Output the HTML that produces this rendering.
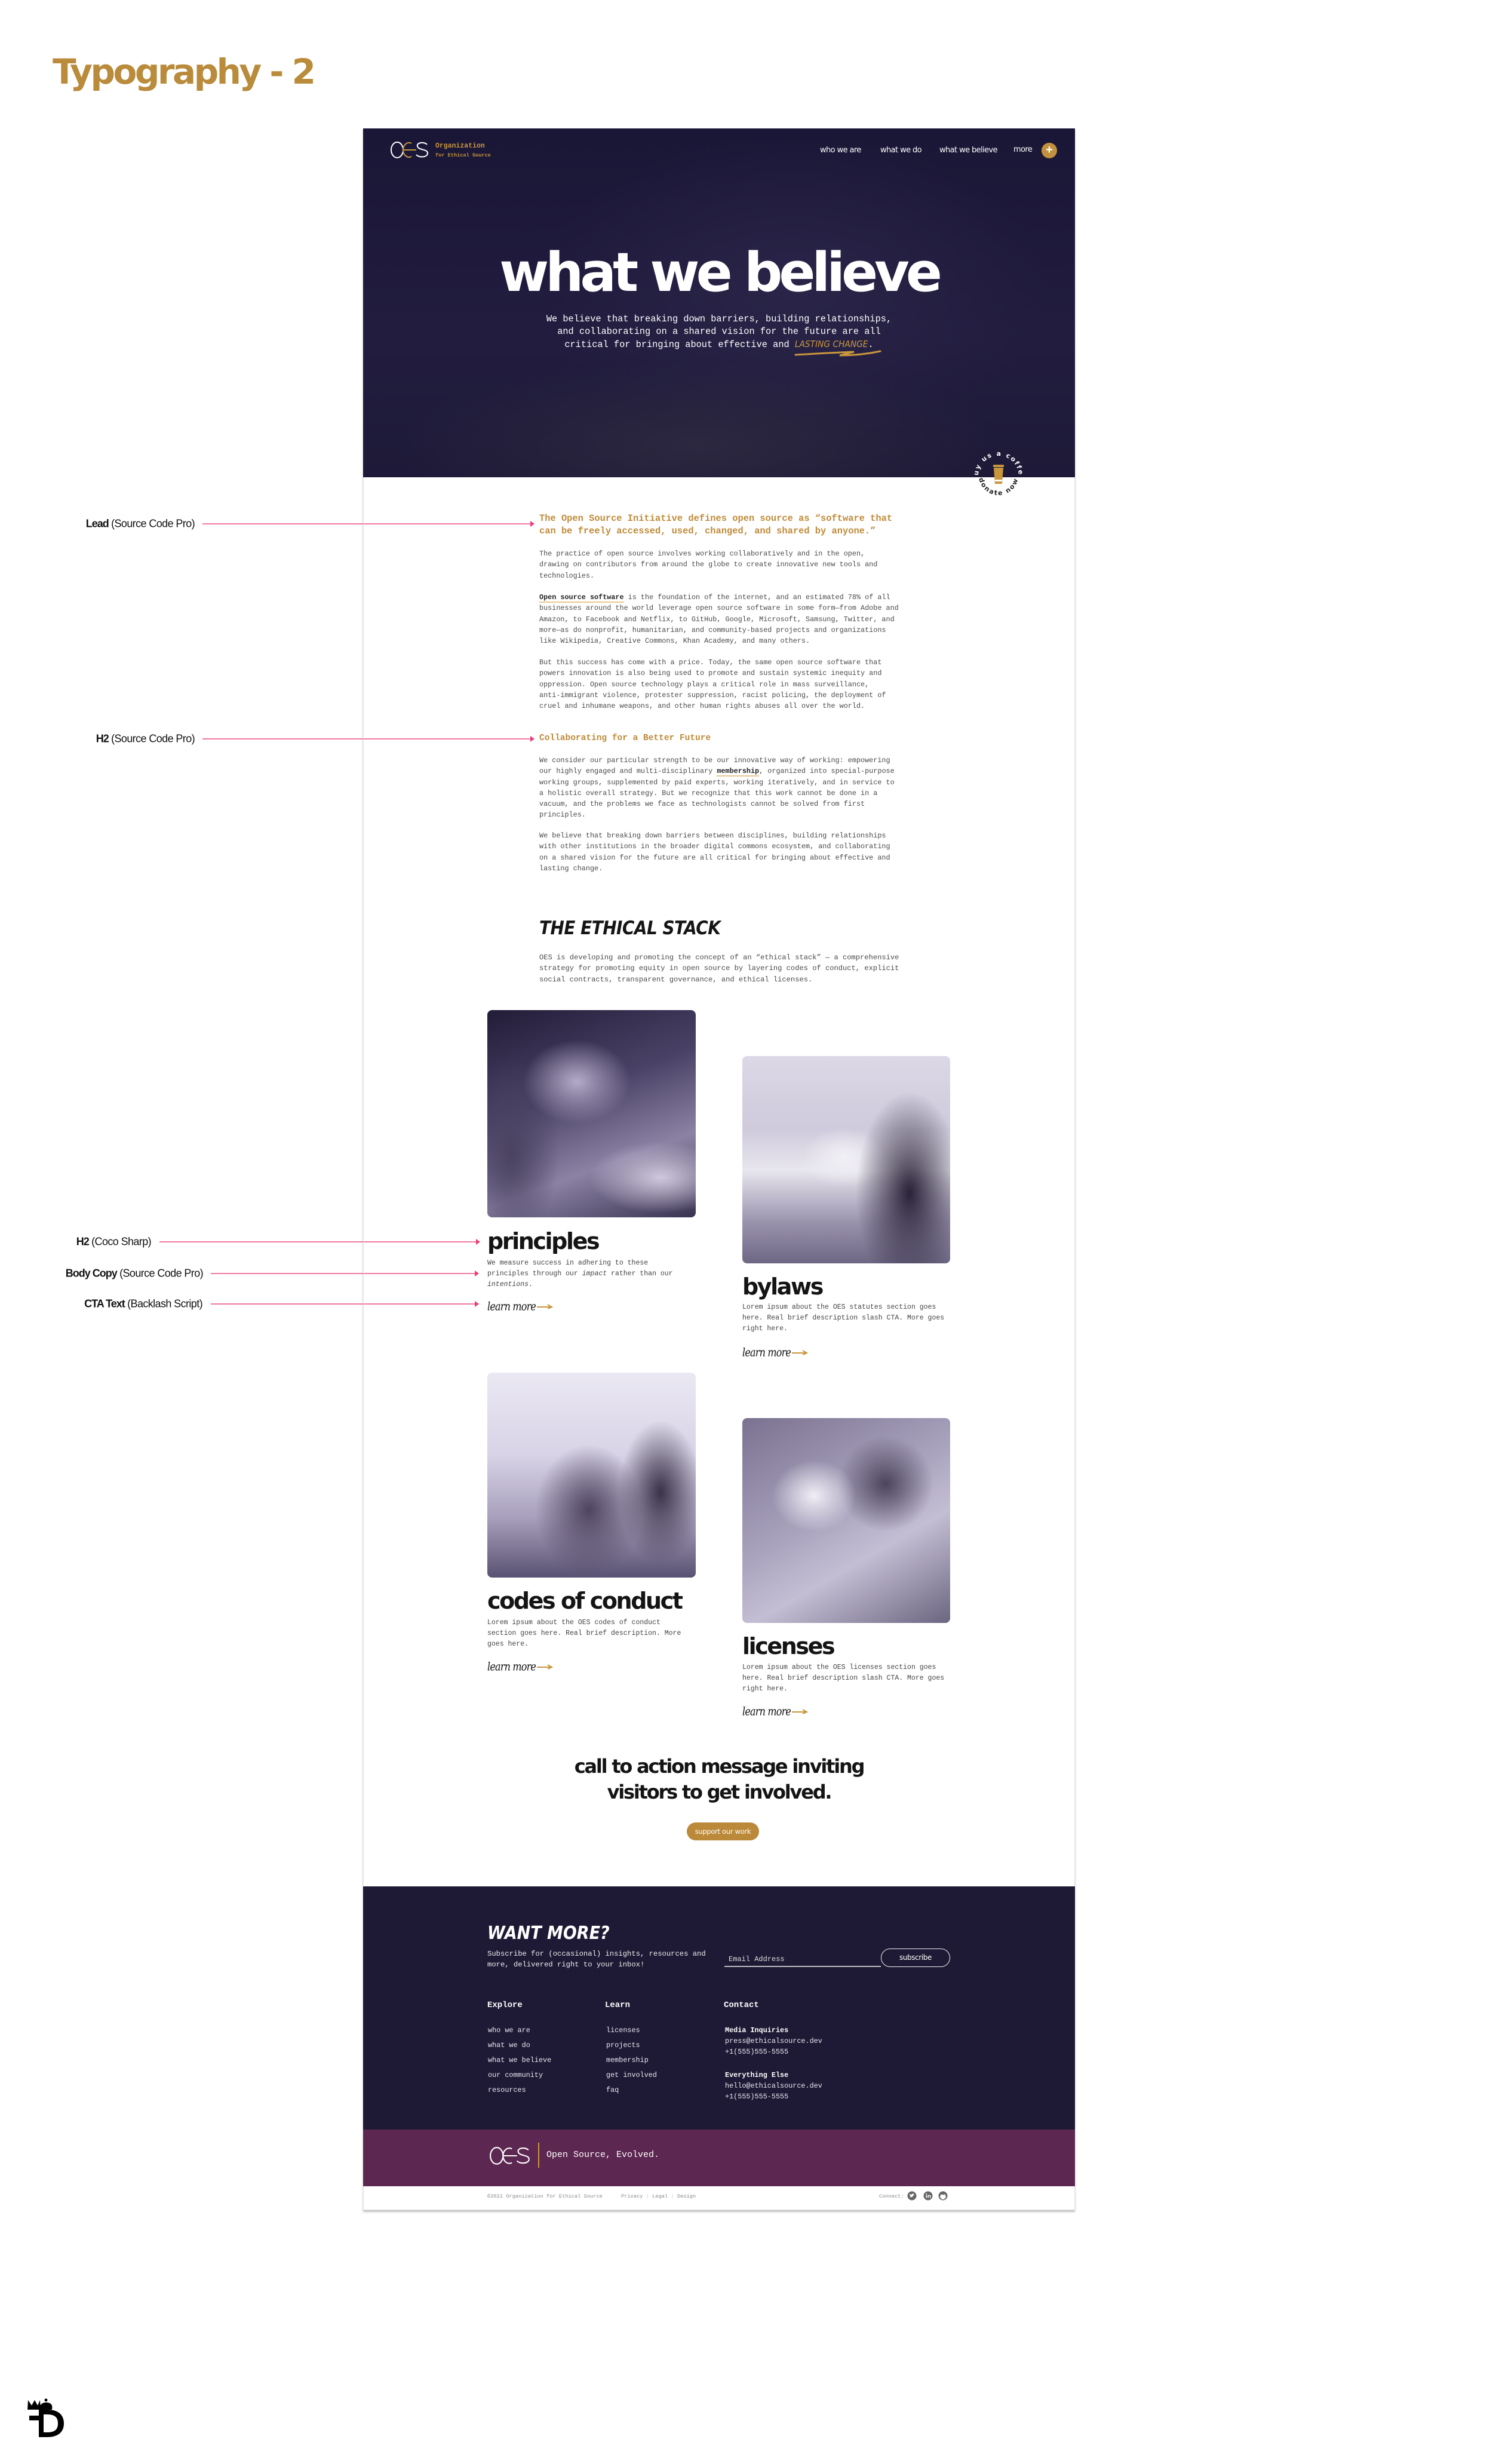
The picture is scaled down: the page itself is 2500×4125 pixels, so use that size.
<!DOCTYPE html>
<html><head><meta charset="utf-8">
<style>
*{margin:0;padding:0;box-sizing:border-box}
html,body{width:2500px;height:4125px;background:#fff;overflow:hidden;position:relative;font-family:"Liberation Sans",sans-serif}
.a{position:absolute;white-space:nowrap}
.mono{font-family:"Liberation Mono","DejaVu Sans Mono",monospace}
.coco{font-family:"DejaVu Sans","Liberation Sans",sans-serif;font-weight:bold}
.p{font-family:"Liberation Mono",monospace;color:#4a4a4a;font-size:11.8px;line-height:18.3px;white-space:nowrap}
.ann{position:absolute;font-size:18px;color:#111;letter-spacing:-0.6px;white-space:nowrap;transform:translateY(-50%)}
.ann b{font-weight:bold;letter-spacing:-1px}
.line{position:absolute;height:2px;background:#f07aa0}
.line:after{content:"";position:absolute;right:-2px;top:-4px;border-left:7px solid #ec3d7a;border-top:5px solid transparent;border-bottom:5px solid transparent}
.img{position:absolute;border-radius:8px;overflow:hidden}
.ct{position:absolute;font-family:"DejaVu Sans",sans-serif;font-weight:bold;font-size:38px;letter-spacing:-2.4px;color:#141414;white-space:nowrap;line-height:1;transform:translateY(-55%)}
.learn{position:absolute;font-family:"DejaVu Serif",serif;font-style:italic;font-size:16px;color:#111;letter-spacing:-0.8px;white-space:nowrap;transform:translateY(-55%) scaleY(1.2)}
.arrow{position:absolute}
.fl{position:absolute;font-family:"Liberation Mono",monospace;font-size:11.8px;color:#e8e6f0;white-space:nowrap;transform:translateY(-50%)}
</style></head><body>

<div class="a coco" style="left:88px;top:82px;font-size:58px;color:#b98b3b;letter-spacing:-3.5px;line-height:76px">Typography - 2</div>

<!-- annotations -->
<div class="ann" style="right:2174px;top:877px"><b>Lead</b> (Source Code Pro)</div>
<div class="line" style="left:339px;width:554px;top:876px"></div>
<div class="ann" style="right:2174px;top:1237px"><b>H2</b> (Source Code Pro)</div>
<div class="line" style="left:339px;width:554px;top:1236px"></div>
<div class="ann" style="right:2247px;top:2079px"><b>H2</b> (Coco Sharp)</div>
<div class="line" style="left:267px;width:535px;top:2078px"></div>
<div class="ann" style="right:2160px;top:2132px"><b>Body Copy</b> (Source Code Pro)</div>
<div class="line" style="left:353px;width:447px;top:2131px"></div>
<div class="ann" style="right:2161px;top:2183px"><b>CTA Text</b> (Backlash Script)</div>
<div class="line" style="left:353px;width:447px;top:2182px"></div>

<!-- frame -->
<div class="a" style="left:608px;top:215px;width:1192px;height:3485px;border:1px solid #e4e4ea;box-shadow:0 3px 3px rgba(0,0,0,.25)"></div>

<!-- hero -->
<div class="a" style="left:608px;top:215px;width:1192px;height:584px;background:radial-gradient(ellipse 500px 140px at 560px 530px,#2c2840 0%,rgba(44,40,64,0) 100%),radial-gradient(ellipse 420px 260px at 720px 270px,#2a2548 0%,rgba(40,36,70,0) 100%),linear-gradient(180deg,#1a1636 0%,#221d3f 60%,#1d1937 100%)"></div>
<svg class="a" style="left:653px;top:236px" width="66" height="30" viewBox="0 0 66 30">
<ellipse cx="12" cy="15" rx="10" ry="13" fill="none" stroke="#fff" stroke-width="2"/>
<path d="M36 4 A10 12 0 1 0 36 26 M22 15 H44" fill="none" stroke="#c9963e" stroke-width="2"/>
<path d="M62 6 C58 1 44 2 46 9 C48 16 64 13 63 21 C62 28 48 28 44 23" fill="none" stroke="#fff" stroke-width="2"/>
</svg>
<div class="a mono" style="left:729px;top:238px;font-size:11.5px;font-weight:bold;color:#c9963e;line-height:14px">Organization</div>
<div class="a mono" style="left:729px;top:254px;font-size:8.6px;font-weight:bold;color:#c9963e;line-height:12px">for Ethical Source</div>
<div class="a" style="left:1373px;top:244px;font-size:13px;color:#fff;font-family:'DejaVu Sans',sans-serif;letter-spacing:-0.6px">who we are</div>
<div class="a" style="left:1474px;top:244px;font-size:13px;color:#fff;font-family:'DejaVu Sans',sans-serif;letter-spacing:-0.6px">what we do</div>
<div class="a" style="left:1573px;top:244px;font-size:13px;color:#fff;font-family:'DejaVu Sans',sans-serif;letter-spacing:-0.6px">what we believe</div>
<div class="a" style="left:1697px;top:243px;font-size:13px;color:#fff;font-family:'DejaVu Sans',sans-serif;letter-spacing:-0.6px">more</div>
<div class="a" style="left:1744px;top:239px;width:26px;height:26px;border-radius:50%;background:#c2913f;color:#fff;font-size:20px;line-height:25px;text-align:center;font-weight:bold">+</div>

<div class="a coco" style="left:608px;width:1192px;text-align:center;top:402px;font-size:90px;letter-spacing:-6px;color:#fff;line-height:110px">what we believe</div>
<div class="a mono" style="left:608px;width:1192px;text-align:center;top:524px;font-size:15.3px;line-height:21px;color:#fff;white-space:normal">We believe that breaking down barriers, building relationships,<br>and collaborating on a shared vision for the future are all<br>critical for bringing about effective and <span style="color:#c9963e;font-family:'DejaVu Sans Condensed','DejaVu Sans',sans-serif;font-style:italic">LASTING CHANGE</span>.</div>
<svg class="a" style="left:1330px;top:585px" width="146" height="14" viewBox="0 0 146 14"><path d="M2 9 C40 7 70 5 100 4 L76 10 C100 10 125 7 144 3" fill="none" stroke="#c9963e" stroke-width="3" stroke-linecap="round"/></svg>

<!-- coffee badge -->
<svg class="a" style="left:1622px;top:742px" width="100" height="100" viewBox="0 0 100 100">
<defs><path id="top" d="M16 55 A34 34 0 0 1 84 55"/><path id="bot" d="M18 62 A33 33 0 0 0 82 62"/></defs>
<text font-family="DejaVu Sans" font-weight="bold" font-size="11" fill="#fff" letter-spacing="2"><textPath href="#top" startOffset="50%" text-anchor="middle">buy us a coffee</textPath></text>
<text font-family="DejaVu Sans" font-weight="bold" font-size="11" fill="#222" letter-spacing="2"><textPath href="#bot" startOffset="50%" text-anchor="middle">donate now</textPath></text>
<rect x="41" y="36" width="18" height="4" rx="1" fill="#c9963e"/>
<path d="M42 41 H58 L56 68 H44 Z" fill="#c9963e"/>
<rect x="44" y="61" width="12" height="3" fill="#fff"/>
</svg>

<!-- main copy -->
<div class="a mono" style="left:903px;top:858px;font-size:15.4px;line-height:21px;font-weight:bold;color:#bf8b3a">The Open Source Initiative defines open source as “software that<br>can be freely accessed, used, changed, and shared by anyone.”</div>
<div class="a p" style="left:903px;top:918px">The practice of open source involves working collaboratively and in the open,<br>drawing on contributors from around the globe to create innovative new tools and<br>technologies.</div>
<div class="a p" style="left:903px;top:991px"><b style="color:#222;border-bottom:2px solid #e7c98f">Open source software</b> is the foundation of the internet, and an estimated 78% of all<br>businesses around the world leverage open source software in some form—from Adobe and<br>Amazon, to Facebook and Netflix, to GitHub, Google, Microsoft, Samsung, Twitter, and<br>more—as do nonprofit, humanitarian, and community-based projects and organizations<br>like Wikipedia, Creative Commons, Khan Academy, and many others.</div>
<div class="a p" style="left:903px;top:1100px">But this success has come with a price. Today, the same open source software that<br>powers innovation is also being used to promote and sustain systemic inequity and<br>oppression. Open source technology plays a critical role in mass surveillance,<br>anti-immigrant violence, protester suppression, racist policing, the deployment of<br>cruel and inhumane weapons, and other human rights abuses all over the world.</div>
<div class="a mono" style="left:903px;top:1226px;font-size:14.5px;line-height:20px;font-weight:bold;color:#bf8b3a">Collaborating for a Better Future</div>
<div class="a p" style="left:903px;top:1264px">We consider our particular strength to be our innovative way of working: empowering<br>our highly engaged and multi-disciplinary <b style="color:#222;border-bottom:2px solid #e7c98f">membership</b>, organized into special-purpose<br>working groups, supplemented by paid experts, working iteratively, and in service to<br>a holistic overall strategy. But we recognize that this work cannot be done in a<br>vacuum, and the problems we face as technologists cannot be solved from first<br>principles.</div>
<div class="a p" style="left:903px;top:1390px">We believe that breaking down barriers between disciplines, building relationships<br>with other institutions in the broader digital commons ecosystem, and collaborating<br>on a shared vision for the future are all critical for bringing about effective and<br>lasting change.</div>

<div class="a" style="left:903px;top:1534px;font-family:'DejaVu Sans Condensed','DejaVu Sans',sans-serif;font-weight:bold;font-style:italic;font-size:31px;line-height:40px;color:#151515;letter-spacing:-0.5px">THE ETHICAL STACK</div>
<div class="a p" style="left:903px;top:1594px;font-size:12.1px">OES is developing and promoting the concept of an “ethical stack” — a comprehensive<br>strategy for promoting equity in open source by layering codes of conduct, explicit<br>social contracts, transparent governance, and ethical licenses.</div>

<!-- cards -->
<div class="img" style="left:816px;top:1691px;width:349px;height:347px;background:radial-gradient(ellipse 90px 70px at 150px 120px,#b4aac8,transparent),radial-gradient(ellipse 120px 60px at 290px 280px,#cfc8dc,transparent),radial-gradient(ellipse 80px 160px at 40px 240px,#4a4260,transparent),linear-gradient(160deg,#221c38 0%,#4a4266 40%,#8b82a4 70%,#3a3350 100%)"></div>
<div class="img" style="left:1243px;top:1768px;width:348px;height:347px;background:radial-gradient(ellipse 90px 170px at 280px 230px,#2a2238,transparent),radial-gradient(ellipse 70px 50px at 170px 170px,#f2f0f6,transparent),linear-gradient(180deg,#dcd8e6 0%,#cfcadc 35%,#e8e6ee 55%,#9a93ae 80%,#6e6784 100%)"></div>
<div class="img" style="left:816px;top:2298px;width:349px;height:343px;background:radial-gradient(ellipse 70px 120px at 290px 200px,#3a3248,transparent),radial-gradient(ellipse 90px 110px at 170px 230px,#4e4460,transparent),linear-gradient(180deg,#ebe8f4 0%,#d8d3e6 40%,#a9a1bd 70%,#5a5272 100%)"></div>
<div class="img" style="left:1243px;top:2374px;width:348px;height:343px;background:radial-gradient(ellipse 70px 60px at 120px 130px,#f0eef6,transparent),radial-gradient(ellipse 80px 80px at 240px 110px,#4c445c,transparent),linear-gradient(150deg,#7a7290 0%,#aaa3be 45%,#c4bed4 65%,#6c6580 100%)"></div>

<div class="ct" style="left:816px;top:2080px">principles</div>
<div class="a p" style="left:816px;top:2106px;font-size:11.5px;line-height:18px;color:#444">We measure success in adhering to these<br>principles through our <i>impact</i> rather than our<br><i>intentions</i>.</div>
<div class="learn" style="left:816px;top:2188px">learn more</div>
<svg class="arrow" style="left:898px;top:2183px" width="28" height="10"><path d="M1 5 H25 M19 1 L26 5 L19 8" fill="none" stroke="#c9963e" stroke-width="2"/></svg>

<div class="ct" style="left:1243px;top:2156px">bylaws</div>
<div class="a p" style="left:1243px;top:2180px;font-size:11.5px;line-height:18px;color:#444">Lorem ipsum about the OES statutes section goes<br>here. Real brief description slash CTA. More goes<br>right here.</div>
<div class="learn" style="left:1243px;top:2265px">learn more</div>
<svg class="arrow" style="left:1325px;top:2260px" width="28" height="10"><path d="M1 5 H25 M19 1 L26 5 L19 8" fill="none" stroke="#c9963e" stroke-width="2"/></svg>

<div class="ct" style="left:816px;top:2682px">codes of conduct</div>
<div class="a p" style="left:816px;top:2708px;font-size:11.5px;line-height:18px;color:#444">Lorem ipsum about the OES codes of conduct<br>section goes here. Real brief description. More<br>goes here.</div>
<div class="learn" style="left:816px;top:2791px">learn more</div>
<svg class="arrow" style="left:898px;top:2786px" width="28" height="10"><path d="M1 5 H25 M19 1 L26 5 L19 8" fill="none" stroke="#c9963e" stroke-width="2"/></svg>

<div class="ct" style="left:1243px;top:2758px">licenses</div>
<div class="a p" style="left:1243px;top:2783px;font-size:11.5px;line-height:18px;color:#444">Lorem ipsum about the OES licenses section goes<br>here. Real brief description slash CTA. More goes<br>right here.</div>
<div class="learn" style="left:1243px;top:2866px">learn more</div>
<svg class="arrow" style="left:1325px;top:2861px" width="28" height="10"><path d="M1 5 H25 M19 1 L26 5 L19 8" fill="none" stroke="#c9963e" stroke-width="2"/></svg>

<!-- CTA -->
<div class="a coco" style="left:608px;width:1192px;text-align:center;top:2936px;font-size:32px;line-height:43px;letter-spacing:-2.2px;color:#141414">call to action message inviting<br>visitors to get involved.</div>
<div class="a" style="left:1150px;top:3051px;width:121px;height:30px;border-radius:15px;background:#bb893a;color:#fff;font-family:'DejaVu Sans',sans-serif;font-size:11.5px;line-height:30px;text-align:center;letter-spacing:-0.3px">support our work</div>

<!-- footer -->
<div class="a" style="left:608px;top:3158px;width:1192px;height:407px;background:#1e1a35"></div>
<div class="a" style="left:816px;top:3219px;font-family:'DejaVu Sans Condensed','DejaVu Sans',sans-serif;font-weight:bold;font-style:italic;font-size:30px;line-height:36px;color:#fff">WANT MORE?</div>
<div class="a mono" style="left:816px;top:3262px;font-size:12.2px;line-height:18px;color:#eee">Subscribe for (occasional) insights, resources and<br>more, delivered right to your inbox!</div>
<div class="a mono" style="left:1220px;top:3273px;font-size:12px;color:#ddd">Email Address</div>
<div class="a" style="left:1213px;top:3291px;width:262px;height:2px;background:#bbb"></div>
<div class="a" style="left:1475px;top:3262px;width:116px;height:31px;border:1.5px solid #eee;border-radius:16px;color:#fff;font-family:'DejaVu Sans',sans-serif;font-size:12px;line-height:28px;text-align:center;letter-spacing:-0.4px">subscribe</div>
<div class="fl" style="left:816px;top:3357px;font-size:14px;font-weight:bold;color:#fff">Explore</div>
<div class="fl" style="left:1013px;top:3357px;font-size:14px;font-weight:bold;color:#fff">Learn</div>
<div class="fl" style="left:1212px;top:3357px;font-size:14px;font-weight:bold;color:#fff">Contact</div>
<div class="fl" style="left:817px;top:3399px">who we are</div>
<div class="fl" style="left:817px;top:3424px">what we do</div>
<div class="fl" style="left:817px;top:3449px">what we believe</div>
<div class="fl" style="left:817px;top:3474px">our community</div>
<div class="fl" style="left:817px;top:3499px">resources</div>
<div class="fl" style="left:1015px;top:3399px">licenses</div>
<div class="fl" style="left:1015px;top:3424px">projects</div>
<div class="fl" style="left:1015px;top:3449px">membership</div>
<div class="fl" style="left:1015px;top:3474px">get involved</div>
<div class="fl" style="left:1015px;top:3499px">faq</div>
<div class="fl" style="left:1214px;top:3399px;font-weight:bold;color:#fff">Media Inquiries</div>
<div class="fl" style="left:1214px;top:3417px">press@ethicalsource.dev</div>
<div class="fl" style="left:1214px;top:3435px">+1(555)555-5555</div>
<div class="fl" style="left:1214px;top:3474px;font-weight:bold;color:#fff">Everything Else</div>
<div class="fl" style="left:1214px;top:3492px">hello@ethicalsource.dev</div>
<div class="fl" style="left:1214px;top:3510px">+1(555)555-5555</div>

<div class="a" style="left:608px;top:3565px;width:1192px;height:95px;background:#5c2750"></div>
<svg class="a" style="left:819px;top:3592px" width="70" height="34" viewBox="0 0 66 30">
<ellipse cx="12" cy="15" rx="10" ry="13" fill="none" stroke="#fff" stroke-width="2"/>
<path d="M36 4 A10 12 0 1 0 36 26 M22 15 H44" fill="none" stroke="#fff" stroke-width="2"/>
<path d="M62 6 C58 1 44 2 46 9 C48 16 64 13 63 21 C62 28 48 28 44 23" fill="none" stroke="#fff" stroke-width="2"/>
</svg>
<div class="a" style="left:901px;top:3587px;width:2px;height:42px;background:#c9963e"></div>
<div class="a mono" style="left:915px;top:3598px;font-size:15px;line-height:20px;color:#fff">Open Source, Evolved.</div>

<div class="a mono" style="left:816px;top:3672px;font-size:8.7px;color:#888">©2021 Organization for Ethical Source</div>
<div class="a mono" style="left:1040px;top:3672px;font-size:8.7px;color:#888">Privacy <span style="color:#ccc">|</span> Legal <span style="color:#ccc">|</span> Design</div>
<div class="a mono" style="left:1472px;top:3672px;font-size:8.7px;color:#888">Connect:</div>
<svg class="a" style="left:1519px;top:3668px" width="70" height="16" viewBox="0 0 70 16">
<circle cx="8" cy="8" r="7.5" fill="#666"/><path d="M4 10 C7 11 10 10 11 6 L12 5 L11 5 C10 4 8 4 8 6 C6 6 5 5 4 5 C4 7 5 8 6 8 Z" fill="#fff"/>
<circle cx="35" cy="8" r="7.5" fill="#666"/><rect x="31.5" y="6.5" width="1.6" height="5" fill="#fff"/><circle cx="32.3" cy="4.8" r="0.9" fill="#fff"/><path d="M34.5 11.5 V6.5 H36 V7.5 C37 6 39.5 6.3 39.5 8.5 V11.5 H38 V9 C38 7.5 36 7.5 36 9 V11.5 Z" fill="#fff"/>
<circle cx="60" cy="8" r="7.5" fill="#666"/><path d="M57.5 14 V12 C55.5 12 55 11 55 10 C55 9 55.5 8.5 56 8 C55.8 7 56 6 56.3 5.5 C57 5.5 58 6 58.5 6.3 C59.5 6 60.5 6 61.5 6.3 C62 6 63 5.5 63.7 5.5 C64 6 64.2 7 64 8 C64.5 8.5 65 9 65 10 C65 11 64.5 12 62.5 12 V14 Z" fill="#fff"/>
</svg>

<!-- bottom-left logo -->
<svg class="a" style="left:43px;top:4014px" width="66" height="68" viewBox="0 0 66 68">
<path d="M2 20 H36 C58 20 64 32 64 43 C64 56 56 66 36 66 H22 V38 H6 V30 H22 V20 Z M30 28 V58 H36 C50 58 54 52 54 43 C54 34 50 28 36 28 Z" fill="#000" fill-rule="evenodd"/>
<path d="M3 20 L4 4 L10 13 L15 4 L20 13 L24 4 L25 20 Z" fill="#000"/>
<path d="M24 20 C22 10 30 8 34 8 C40 8 46 10 44 20 Z" fill="#000"/>
<circle cx="34" cy="4" r="2.5" fill="#000"/>
</svg>

</body></html>
